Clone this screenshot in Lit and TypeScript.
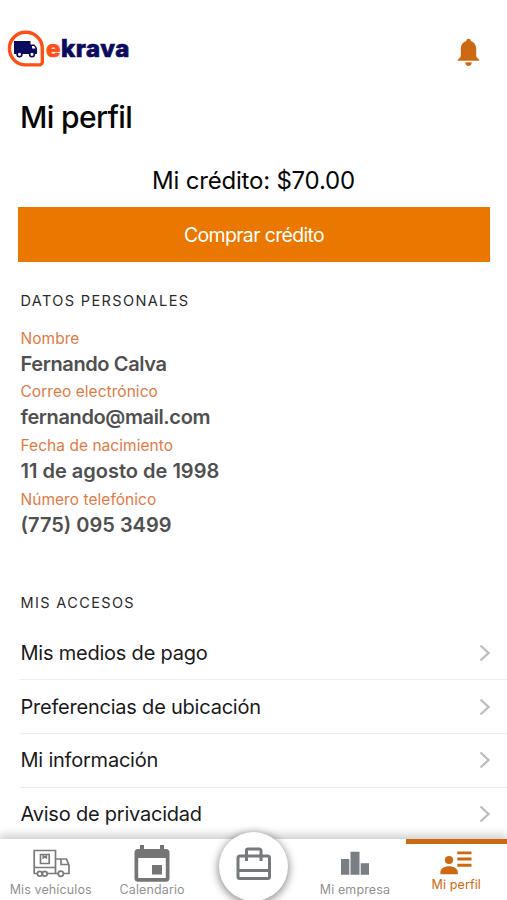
import { LitElement, html, svg, css } from "lit";
import { customElement } from "lit/decorators.js";

const truckIcon = svg`<svg width="38" height="30" viewBox="0 0 38 30" fill="none" stroke="#7b7b7b" stroke-width="1.7">
  <path d="M5.400 25.500H2.200V2.500H23.500V25.500H15.200M23.500 25.500H26.200M31.500 25.500H37V17.500L34.500 11H23.500M2.200 19.500H23.500M29 11V16.500H36.500"/>
  <path d="M8.500 6.500H17.200V15.500H8.500ZM11.300 6.500V9.700L12.800 8.800L14.300 9.700V6.500"/>
  <circle cx="7.800" cy="25.800" r="2.400"/><circle cx="12.800" cy="25.800" r="2.400"/><circle cx="28.800" cy="25.800" r="2.600"/></svg>`;

const calendarIcon = svg`<svg width="36" height="37" viewBox="0 0 36 37">
  <path fill="#757575" fill-rule="evenodd" d="M6 0H10V4H26V0H30V4H32A3.600 3.600 0 0 1 35.500 7.500V33A3.600 3.600 0 0 1 32 36.800H4A3.600 3.600 0 0 1 .5 33V7.500A3.600 3.600 0 0 1 4 4H6ZM4.200 13V33H31.800V13ZM18 20H28V29.500H18Z"/></svg>`;

const companyIcon = svg`<svg width="28" height="24" viewBox="0 0 28 24" fill="#7a7f84">
  <path d="M0 8H8.300V23.700H0ZM9.500 .8H18.500V23.700H9.500ZM19.700 12.200H28V23.700H19.700Z"/></svg>`;

const profileIcon = svg`<svg width="32" height="24" viewBox="0 0 32 24" fill="#cd6912">
  <circle cx="9" cy="9" r="4.100"/><path d="M.4 23.200V21.300C.4 17.300 4.500 15.200 9 15.200S17.800 17.300 17.800 21.300V23.200Z"/>
  <path d="M17.300 .4H31.500V3.300H17.300ZM17.300 6.500H31.500V9.400H17.300ZM17.300 12.800H31.500V15.800H17.300Z"/></svg>`;

const bagIcon = svg`<svg width="36" height="34" viewBox="0 0 36 34" fill="none" stroke="#757a7c" stroke-width="3">
  <rect x="2" y="9" width="31.500" height="22.500" rx="2"/><path d="M10.500 14V9M25 14V9M10.500 9V3.500A1.500 1.500 0 0 1 12 2H23.500A1.500 1.500 0 0 1 25 3.500V9M2 23.500H33.500"/></svg>`;

const chevron = svg`<svg width="12" height="18" viewBox="0 0 12 18" fill="none" stroke="#bdbdbd" stroke-width="2.300"><path d="M1.500 1.500L9.500 9L1.500 16.500"/></svg>`;

@customElement("app-root")
export class AppRoot extends LitElement {
  static styles = css`
    :host { display: flex; flex-direction: column; position: relative; height: 900px; overflow: hidden; background: #fff; color: #111; font-family: Inter, "Liberation Sans", sans-serif; }
    * { box-sizing: border-box; }
    header { display: flex; justify-content: space-between; align-items: flex-start; height: 97px; padding: 30px 26px 0 6px; flex: none; }
    .logo { display: flex; }
    .word { font: 800 24px/37px Inter, sans-serif; color: #0b0b60; letter-spacing: .55px; -webkit-text-stroke: .7px; }
    .word b { color: #fe4f16; font-weight: inherit; }
    .bell { margin-top: 8px; }
    h1 { margin: 0 0 0 20px; font-size: 30px; line-height: 40px; font-weight: 500; letter-spacing: -.62px; color: #060606; height: 68px; flex: none; }
    .credit { text-align: center; font-size: 24px; line-height: 32px; height: 42px; letter-spacing: -.2px; color: #060606; flex: none; }
    .buy { margin: 0 17px 0 18px; height: 55px; border: 0; flex: none; background: #ea7700; color: #fff; font: 400 19.500px/55px Inter, sans-serif; letter-spacing: -.66px; padding: 1px 0 0; }
    h2 { margin: 0 0 0 20.500px; font-size: 14.500px; line-height: 20px; font-weight: 400; color: #2b2b2b; letter-spacing: 1.370px; flex: none; }
    .personal { margin-top: 29px; }
    dl { margin: 15.500px 0 0 20.500px; height: 215px; flex: none; }
    dt { font-size: 15.500px; line-height: 24px; height: 24px; letter-spacing: .04px; color: #e27a45; }
    dd { margin: 0; font-size: 20px; line-height: 26px; height: 29.800px; font-weight: 600; color: #505050; }
    .tight { letter-spacing: -.38px; }
    .access { margin-top: 51px; }
    ul { list-style: none; margin: 14px 0 0 20px; padding: 0; flex: none; }
    li { height: 53.700px; display: flex; align-items: center; justify-content: space-between; font-size: 20px; letter-spacing: -.22px; padding: 0 16px 0 .5px; border-bottom: 1px solid #ededed; color: #1a1a1a; }
    nav { position: absolute; left: 0; right: 0; bottom: 0; height: 61px; background: #fff; display: grid; grid-template-columns: repeat(5, 1fr); box-shadow: 0 -3px 9px 1px rgba(0,0,0,.2); }
    .tab { display: flex; flex-direction: column; align-items: center; color: #929292; font-size: 12.500px; letter-spacing: .12px; }
    .box { height: 42px; padding-top: 6px; display: flex; justify-content: center; }
    .truck { padding-top: 9px; }
    .company { padding-top: 12px; }
    .tab span { line-height: 18px; white-space: nowrap; }
    .on { color: #cd6912; border-top: 5px solid #cd6912; height: 61px; }
    .on .box { height: 32px; padding-top: 7px; }
    .fab { width: 69px; height: 69px; border-radius: 50%; background: #fff; box-shadow: 0 2px 9px 1px rgba(0,0,0,.45); margin-top: -7px; justify-self: center; display: flex; align-items: center; justify-content: center; padding: 0 0 5px 1px; }
  `;

  private fields = [
    { label: "Nombre", value: "Fernando Calva", tight: true },
    { label: "Correo electrónico", value: "fernando@mail.com", tight: true },
    { label: "Fecha de nacimiento", value: "11 de agosto de 1998", tight: false },
    { label: "Número telefónico", value: "(775) 095 3499", tight: false },
  ];
  private links = ["Mis medios de pago", "Preferencias de ubicación", "Mi información", "Aviso de privacidad"];

  render() {
    return html`
      <header>
        <div class="logo">
          <svg width="40" height="38" viewBox="0 0 40 38">
            <path d="M19.700 2.300A16.300 16.300 0 1 0 19.700 34.900H34A3 3 0 0 0 36.300 32.500V18.600A16.300 16.300 0 0 0 19.700 2.300Z" fill="#fff" stroke="#fe4f16" stroke-width="3.400"/>
            <path d="M8 11H24.500V14.500H28.500L31 18V24H8Z" fill="#0b0b60"/>
            <path d="M26 16H28L29.700 18.500H26Z" fill="#fff"/>
            <g fill="#fff" stroke="#0b0b60" stroke-width="1.600"><circle cx="13.500" cy="24.300" r="2.400"/><circle cx="26" cy="24.300" r="2.400"/></g>
          </svg>
          <div class="word"><b>e</b>krava</div>
        </div>
        <svg class="bell" width="25" height="30" viewBox="0 0 25 30" fill="#cd6912">
          <path d="M12.500 .8C11.200 .8 10.300 1.700 10.300 2.900C6.500 3.900 4.800 7.200 4.800 11V17.500C4.800 20 2 20.500 1.500 22.700H23.500C23 20.500 20.200 20 20.200 17.500V11C20.200 7.200 18.500 3.900 14.700 2.900C14.700 1.700 13.800 .8 12.500 .8ZM9.300 24.300H15.700C15.700 26.500 14.500 28 12.500 28S9.300 26.500 9.300 24.300Z"/>
        </svg>
      </header>
      <h1>Mi perfil</h1>
      <div class="credit">Mi crédito: $70.00</div>
      <button class="buy">Comprar crédito</button>
      <h2 class="personal">DATOS PERSONALES</h2>
      <dl>${this.fields.map((f) => html`<dt>${f.label}</dt><dd class=${f.tight ? "tight" : ""}>${f.value}</dd>`)}</dl>
      <h2 class="access">MIS ACCESOS</h2>
      <ul>${this.links.map((l) => html`<li><span>${l}</span>${chevron}</li>`)}</ul>
      <nav>
        <div class="tab"><div class="box truck">${truckIcon}</div><span>Mis vehículos</span></div>
        <div class="tab"><div class="box">${calendarIcon}</div><span>Calendario</span></div>
        <div class="fab">${bagIcon}</div>
        <div class="tab"><div class="box company">${companyIcon}</div><span>Mi empresa</span></div>
        <div class="tab on"><div class="box">${profileIcon}</div><span>Mi perfil</span></div>
      </nav>
    `;
  }
}
